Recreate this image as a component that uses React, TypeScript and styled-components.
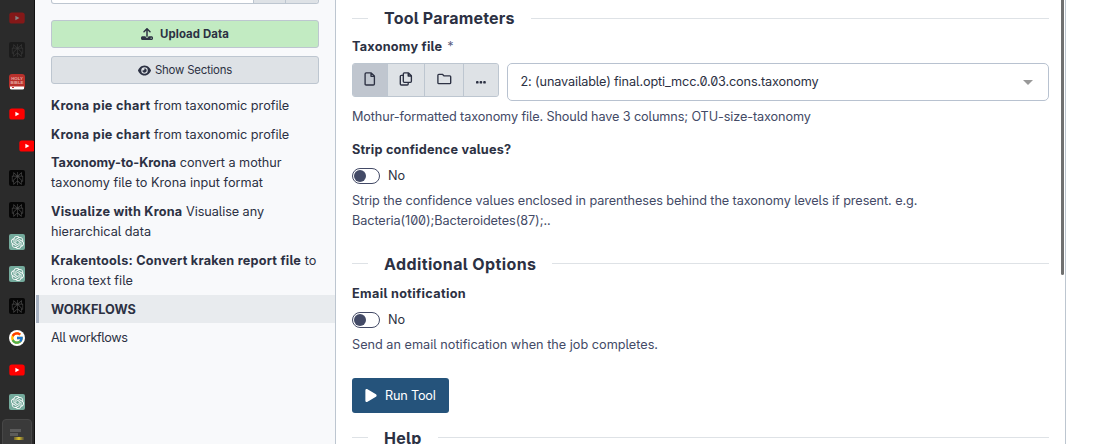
import React from "react";
import styled, { createGlobalStyle } from "styled-components";
import { FaUpload, FaEye, FaPlay } from "react-icons/fa6";
import { SiOpenai, SiPerplexity } from "react-icons/si";
import { FcGoogle } from "react-icons/fc";

const Global = createGlobalStyle`
  * { box-sizing: border-box; }
  html, body { margin: 0; padding: 0; overflow: hidden; background: #fff; }
  body { font: 400 12.7px/20.4px Inter, "Noto Sans", sans-serif; font-feature-settings: "zero", "cv05"; color: #2c3143; }
`;

const Page = styled.div`display: flex; width: 1099px; height: 444px; overflow: hidden;`;

const TabStrip = styled.nav`
  width: 36px; height: 444px; flex: none; background: #2b2b2b; border-right: 1px solid #f8f9fb;
  box-shadow: inset -1px 0 #111; display: flex; flex-direction: column; padding-top: 2px; overflow: hidden;
`;
const Tab = styled.div<{ $faded?: boolean; $child?: boolean }>`
  height: 32px; flex: none; width: 34px; display: flex; align-items: center; overflow: hidden;
  padding-left: ${(p) => (p.$child ? 19 : 9)}px; opacity: ${(p) => (p.$faded ? 0.42 : 1)};
  svg { flex: none; display: block; }
`;
const ActiveTab = styled.div`
  height: 36px; flex: none; width: 30px; margin: 1px 0 0 2px; background: #3a3a3a; border: 1px solid #474747;
  border-radius: 4px; padding: 7px 0 0 6px;
  svg { display: block; }
`;
const Tile = styled.span<{ $bg: string; $fg: string }>`
  width: 16px; height: 16px; flex: none; border-radius: 2px; background: ${(p) => p.$bg}; color: ${(p) => p.$fg};
  display: flex; align-items: center; justify-content: center;
`;
const Disc = styled(Tile)`border-radius: 50%;`;

const Sidebar = styled.aside`width: 300px; flex: none; background: #f8f9fb; border-right: 1px solid #bdc6d0;`;
const SearchRow = styled.div`
  height: 4px; margin: 0 16px 0 15px; display: flex; border: 1px solid #bdc6d0; border-top: 0; border-radius: 0 0 3px 3px;
  background: #fff; overflow: hidden; justify-content: flex-end;
`;
const SearchAction = styled.div<{ $w: number }>`width: ${(p) => p.$w}px; background: #dee2e6; border-left: 1px solid #bdc6d0;`;
const SideButton = styled.button<{ $green?: boolean }>`
  display: flex; align-items: center; justify-content: center; width: 268px; height: 28px; padding: 0;
  margin: ${(p) => (p.$green ? "16px 0 0 15px" : "8px 0 8.2px 15px")}; border: 1px solid #bdc6d0; border-radius: 3px;
  background: ${(p) => (p.$green ? "#c2ebc2" : "#dee2e6")}; color: #2c3143; gap: ${(p) => (p.$green ? 7 : 4)}px;
  font: ${(p) => (p.$green ? 700 : 400)} 11.4px/18px Inter, sans-serif;
`;
const Item = styled.div`padding: 4px 15px; white-space: nowrap;`;
const Band = styled.div`
  height: 28px; background: #e8ebee; border-left: 3px solid #aab4c4; padding: 4.6px 12px 0;
  font-weight: 700; white-space: nowrap; margin-bottom: 0.6px;
`;
const T = styled.span<{ $ls?: number; $b?: boolean }>`
  letter-spacing: ${(p) => p.$ls ?? 0}px; font-weight: ${(p) => (p.$b ? 700 : "inherit")}; white-space: nowrap;
`;

const Main = styled.main`width: 730px; flex: none; display: flex; border-right: 1px solid #bdc6d0;`;
const Form = styled.section`width: 713px; padding-left: 16px; height: 444px; overflow: hidden;`;
const ScrollThumb = styled.div`width: 3px; height: 275px; margin-left: 12px; background: #707070; border-radius: 0 0 2px 2px;`;
const Heading = styled.h2`
  display: flex; align-items: center; margin: 0; height: 28px; font-size: 16px; line-height: 28px; font-weight: 700;
  &::before { content: ""; width: 16px; height: 1px; background: #dee2e6; margin-right: 16px; }
  &::after { content: ""; flex: 1; height: 1px; background: #dee2e6; margin-left: 16px; }
`;
const Label = styled.div`height: 20px; line-height: 20px; font-weight: 700; white-space: nowrap;`;
const Star = styled.span`color: #5a6080; font-weight: 400; margin-left: 5px;`;
const Help = styled.p`margin: 0; color: #434a66; white-space: nowrap;`;
const FieldRow = styled.div`display: flex; gap: 8px; margin-top: 6px; height: 37.5px; align-items: flex-start;`;
const Group = styled.div`
  display: flex; width: 147px; height: 34px; border: 1px solid #bdc6d0; border-radius: 3px; overflow: hidden; background: #dee2e6;
`;
const Kind = styled.div<{ $w: number; $on?: boolean }>`
  width: ${(p) => p.$w}px; display: flex; align-items: center; justify-content: center; flex: none; padding-bottom: 2px;
  background: ${(p) => (p.$on ? "#c0c6cf" : "#dee2e6")};
  & + & { border-left: 1px solid #bdc6d0; }
`;
const Select = styled.div`
  flex: 1; height: 38px; border: 1px solid #b8c2d0; border-radius: 5px; display: flex; align-items: center;
  justify-content: space-between; padding: 0 15px 0 12.5px;
`;
const Caret = styled.i`border: 5px solid transparent; border-top-color: #999; border-bottom: 0;`;
const SwitchRow = styled.div`display: flex; align-items: center; height: 20px; gap: 8px;`;
const Switch = styled.span`
  width: 28px; height: 16px; border: 1px solid #434a66; border-radius: 8px; display: flex; align-items: center; padding-left: 1px;
  &::before { content: ""; width: 12px; height: 12px; border-radius: 50%; background: #434a66; }
`;
const Run = styled.button`
  display: flex; align-items: center; width: 97px; height: 35px; margin: 0; padding: 1px 0 0 12px; gap: 7px; border: 0;
  border-radius: 3px; background: #25537b; color: #fff; font: 400 12.7px/20px Inter, sans-serif;
`;
const PlayIcon = styled(FaPlay)`width: 14px; height: 15px;`;
const Gap = styled.div<{ $h: number }>`height: ${(p) => p.$h}px;`;

const Outline = styled.svg`fill: none; stroke: #2c3143; stroke-width: 1.35; stroke-linejoin: round; display: block;`;
const FileIcon = () => (
  <Outline width="12" height="14" viewBox="0 0 12 14">
    <path d="M2.200.9h5l3.200 3.200v7.800q0 1.100-1.100 1.100H2.200q-1.100 0-1.100-1.100V2Q1.100.9 2.200.9zM7 1v3.300h3.300" />
  </Outline>
);
const CopyIcon = () => (
  <Outline width="14" height="14" viewBox="0 0 14 14">
    <path d="M5.300.9h4.200l2.900 2.900v5.500q0 1-1 1H5.300q-1 0-1-1V1.900q0-1 1-1zM9.200 1v3h3M4 3.300H2.300q-1 0-1 1v7.700q0 1 1 1H8.200q1 0 1-1v-1.500" />
  </Outline>
);
const FolderIcon = () => (
  <Outline width="15" height="12" viewBox="0 0 15 12">
    <path d="M1.800 1.300h3.600l1.700 1.600h5.700q.9 0 .9.900v5.900q0 .9-.9.9h-11q-.9 0-.9-.9V2.200q0-.9.9-.9z" />
  </Outline>
);
const DotsIcon = () => (
  <svg width="10" height="10" viewBox="0 0 10 10" fill="#2c3143">
    <rect x="0" y="7" width="2.600" height="2.600" rx=".9" />
    <rect x="3.600" y="7" width="2.600" height="2.600" rx=".9" />
    <rect x="7.200" y="7" width="2.600" height="2.600" rx=".9" />
  </svg>
);

const YouTube = () => (
  <svg width="16" height="16" viewBox="0 0 16 16">
    <rect x="0.3" y="2.4" width="15.4" height="11.2" rx="2.6" fill="#f00" />
    <path d="M6.400 5.700v4.600L10.400 8z" fill="#fff" />
  </svg>
);
const Bible = () => (
  <svg width="16" height="16" viewBox="0 0 16 16">
    <rect width="16" height="15" rx="3" fill="#b9312c" />
    <path d="M1 12.400h14v1.800q0 1.300-1.600 1.300H2.600Q1 15.500 1 14.200z" fill="#fff" />
    <path d="M3 13.500h2" stroke="#c33" />
    <text x="8" y="6.300" fontSize="4.300" fontWeight="700" textAnchor="middle" fill="#e5a8a3" fontFamily="Liberation Sans">HOLY</text>
    <text x="8" y="10" fontSize="4.300" fontWeight="700" textAnchor="middle" fill="#e5a8a3" fontFamily="Liberation Sans">BIBLE</text>
  </svg>
);
const Perplexity = () => <Tile $bg="#060606" $fg="#4a4a4a"><SiPerplexity size={13} /></Tile>;
const OpenAI = () => <Tile $bg="#74aa9c" $fg="#fff"><SiOpenai size={13} /></Tile>;
const Bars = () => (
  <svg width="18" height="14" viewBox="0 0 18 14">
    <defs><linearGradient id="gold"><stop offset="0" stopColor="#6b6030" /><stop offset=".5" stopColor="#d9bf2c" /><stop offset="1" stopColor="#4c4838" /></linearGradient></defs>
    <path d="M1 2h11v3H1zM1 6h8v3H1z" fill="#5b5b5b" />
    <rect x="5" y="10" width="10" height="3" fill="url(#gold)" />
  </svg>
);

export default function App() {
  return (
    <>
      <Global />
      <Page>
        <TabStrip>
          <Tab $faded><YouTube /></Tab>
          <Tab $faded><Perplexity /></Tab>
          <Tab><Bible /></Tab>
          <Tab><YouTube /></Tab>
          <Tab $child><YouTube /></Tab>
          <Tab><Perplexity /></Tab>
          <Tab><Perplexity /></Tab>
          <Tab><OpenAI /></Tab>
          <Tab><OpenAI /></Tab>
          <Tab><Perplexity /></Tab>
          <Tab><Disc $bg="#fff" $fg="#000"><FcGoogle size={14} /></Disc></Tab>
          <Tab><YouTube /></Tab>
          <Tab><OpenAI /></Tab>
          <ActiveTab><Bars /></ActiveTab>
        </TabStrip>
        <Sidebar>
          <SearchRow><SearchAction $w={32} /><SearchAction $w={33} /></SearchRow>
          <SideButton $green><FaUpload size={12} /><T $ls={0.1}>Upload Data</T></SideButton>
          <SideButton><FaEye size={13} /><T $ls={-0.2}>Show Sections</T></SideButton>
          <Item><T $b $ls={0.3}>Krona pie chart</T> <T $ls={-0.02}>from taxonomic profile</T></Item>
          <Item><T $b $ls={0.3}>Krona pie chart</T> <T $ls={-0.02}>from taxonomic profile</T></Item>
          <Item><T $b>Taxonomy-to-Krona</T> <T $ls={-0.05}>convert a mothur</T><br /><T $ls={0.02}>taxonomy file to Krona input format</T></Item>
          <Item><T $b $ls={0.22}>Visualize with Krona</T> <T $ls={-0.08}>Visualise any</T><br /><T>hierarchical data</T></Item>
          <Item><T $b $ls={0.22}>Krakentools: Convert kraken report file</T> <T>to</T><br /><T>krona text file</T></Item>
          <Band><T $ls={-0.05}>WORKFLOWS</T></Band>
          <Item><T $ls={-0.38}>All workflows</T></Item>
        </Sidebar>
        <Main>
          <Form>
            <Gap $h={4} />
            <Heading><T $ls={0.2}>Tool Parameters</T></Heading>
            <Gap $h={5} />
            <Label><T $ls={0.23}>Taxonomy file</T><Star>*</Star></Label>
            <FieldRow>
              <Group>
                <Kind $w={34} $on><FileIcon /></Kind>
                <Kind $w={37}><CopyIcon /></Kind>
                <Kind $w={39}><FolderIcon /></Kind>
                <Kind $w={35}><DotsIcon /></Kind>
              </Group>
              <Select><T $ls={-0.14}>2: (unavailable) final.opti_mcc.0.03.cons.taxonomy</T><Caret /></Select>
            </FieldRow>
            <Gap $h={6} />
            <Help><T $ls={-0.115}>Mothur-formatted taxonomy file. Should have 3 columns; OTU-size-taxonomy</T></Help>
            <Gap $h={12.6} />
            <Label><T $ls={0.21}>Strip confidence values?</T></Label>
            <Gap $h={6.5} />
            <SwitchRow><Switch /><T>No</T></SwitchRow>
            <Gap $h={4.5} />
            <Help><T $ls={-0.083}>Strip the confidence values enclosed in parentheses behind the taxonomy levels if present. e.g.</T><br /><T $ls={-0.09}>Bacteria(100);Bacteroidetes(87);..</T></Help>
            <Gap $h={18.6} />
            <Heading><T $ls={0.39}>Additional Options</T></Heading>
            <Gap $h={6} />
            <Label><T $ls={0.33}>Email notification</T></Label>
            <Gap $h={6.4} />
            <SwitchRow><Switch /><T>No</T></SwitchRow>
            <Gap $h={4.6} />
            <Help><T>Send an email notification when the job completes.</T></Help>
            <Gap $h={22.4} />
            <Run><PlayIcon /><T $ls={-0.2}>Run Tool</T></Run>
            <Gap $h={11} />
            <Heading><T $ls={0.25}>Help</T></Heading>
          </Form>
          <ScrollThumb />
        </Main>
      </Page>
    </>
  );
}
